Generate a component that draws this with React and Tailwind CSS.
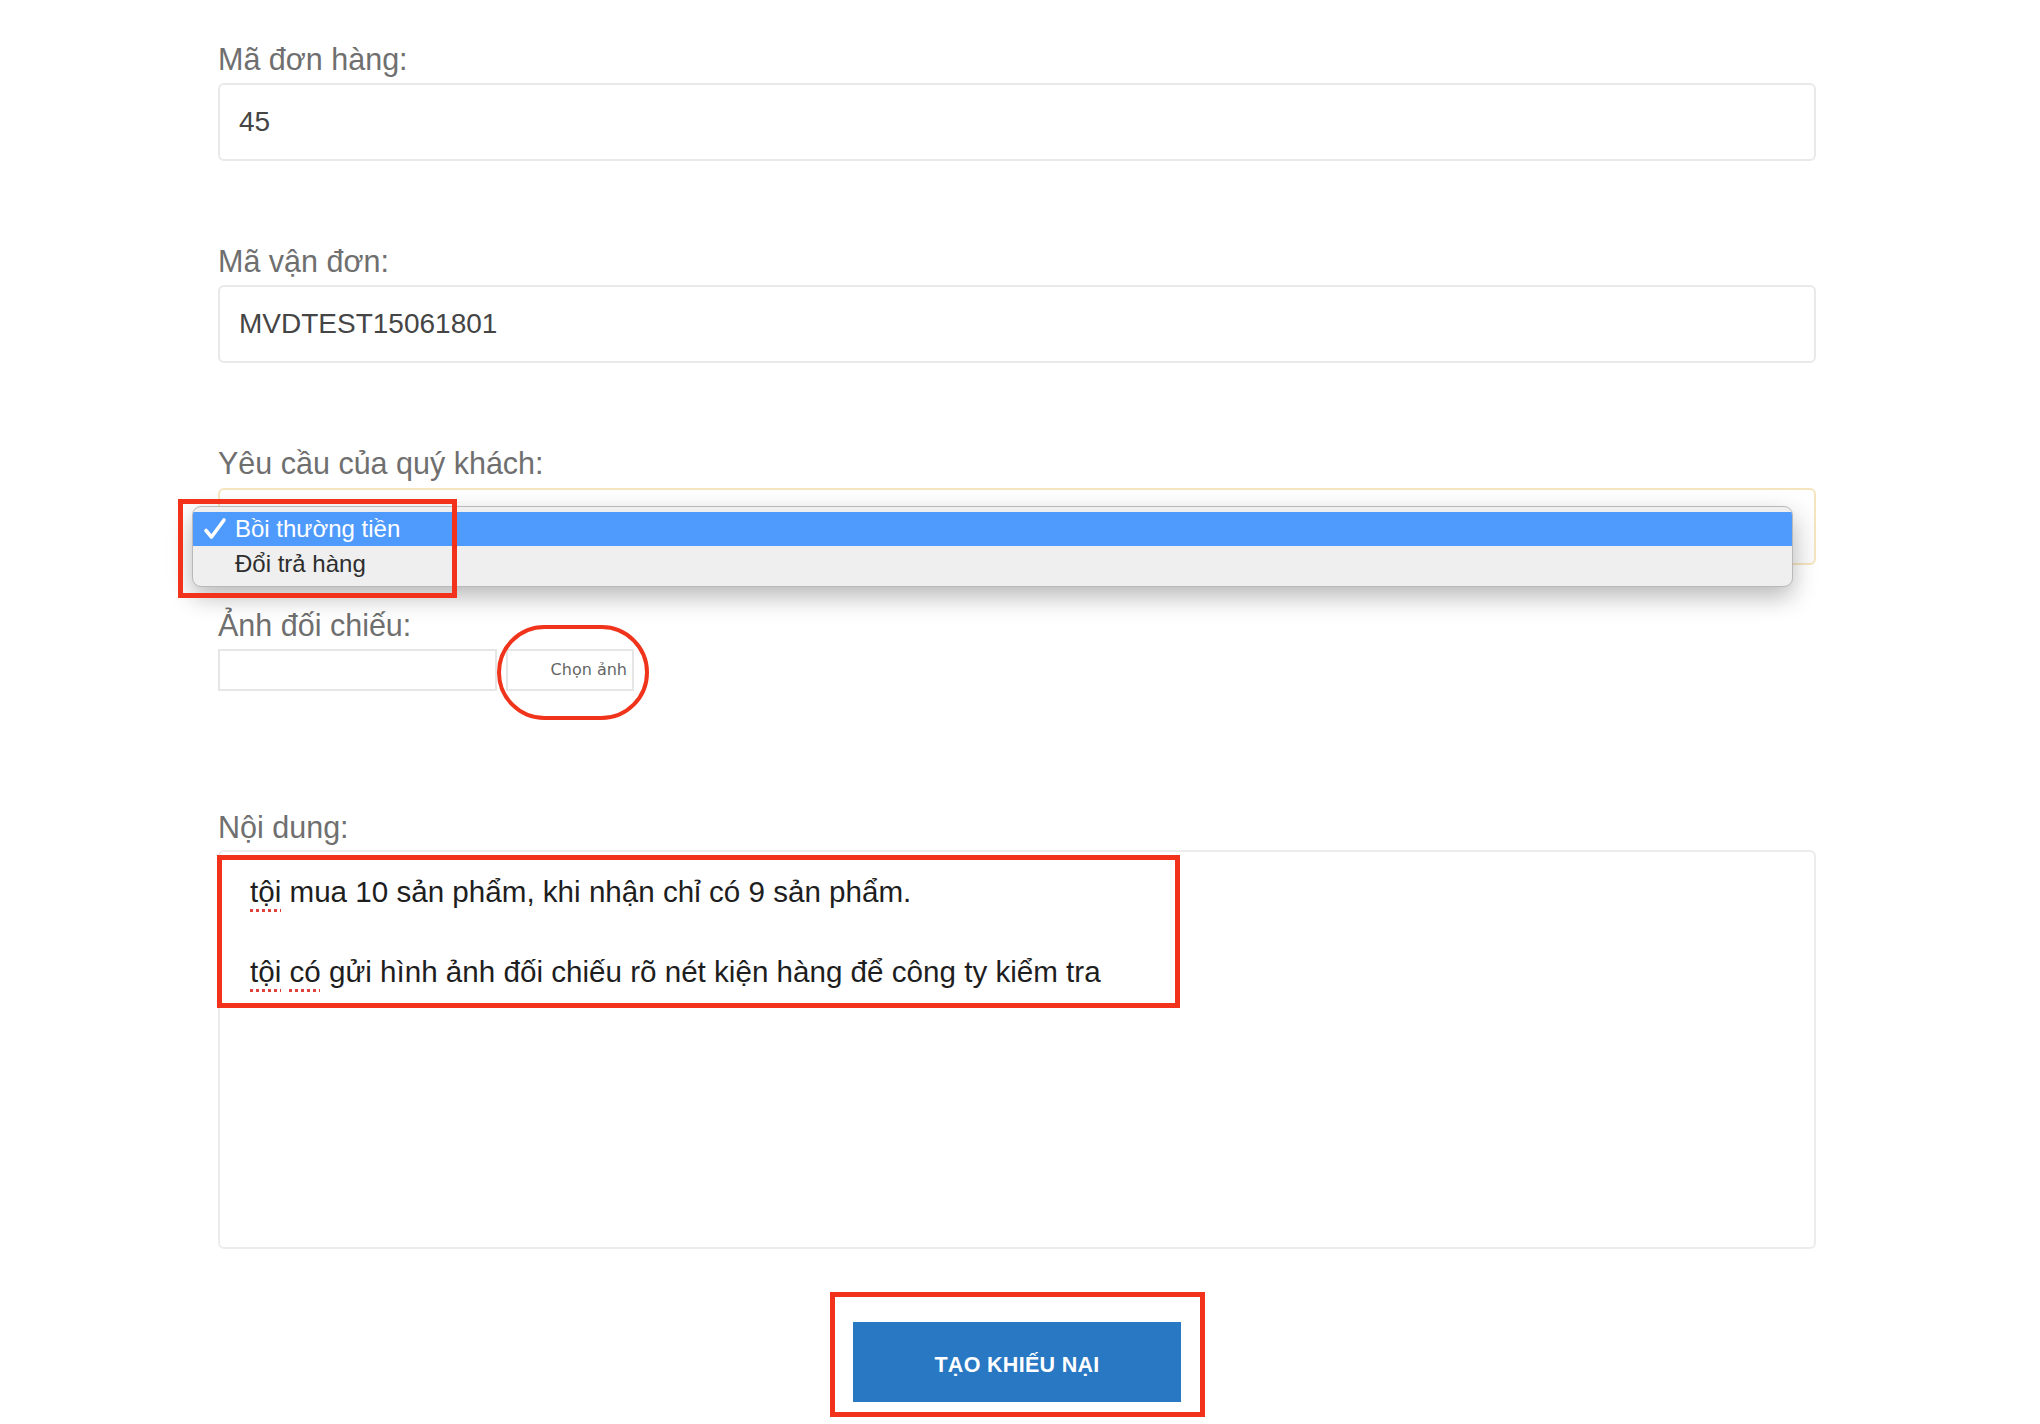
import React from 'react';

const font = { fontFamily: '"Liberation Sans", Arial, sans-serif' };

function Label({ children, className = '' }) {
  return (
    <div className={`text-[30.5px] leading-[34px] text-[#6f6f6f] ${className}`}>{children}</div>
  );
}

function TextBox({ value }) {
  return (
    <div className="mt-[7px] h-[78px] rounded-[6px] border-2 border-[#e9e9e9] px-[19px] flex items-center text-[28px] text-[#454545]">
      {value}
    </div>
  );
}

function Spell({ children }) {
  return (
    <span className="underline decoration-dotted decoration-[#e0413a] decoration-[3px] underline-offset-[7px]">
      {children}
    </span>
  );
}

export default function App() {
  return (
    <div className="min-h-screen bg-white" style={font}>
      <div className="ml-[218px] w-[1598px] pt-[42px] pb-[22px]">
        {/* Mã đơn hàng */}
        <Label>Mã đơn hàng:</Label>
        <TextBox value="45" />

        {/* Mã vận đơn */}
        <Label className="mt-[83px]">Mã vận đơn:</Label>
        <TextBox value="MVDTEST15061801" />

        {/* Yêu cầu - select open */}
        <Label className="mt-[83px]">Yêu cầu của quý khách:</Label>
        <div className="relative mt-[8px] h-[77px] rounded-[6px] border-2 border-[#f5e5be] bg-gradient-to-b from-white to-[#fafafa]">
          <div className="absolute left-[-28px] top-[16px] w-[1601px] h-[81px] rounded-[9px] border border-[#b9b9b9] bg-[#efefef] pt-[5px] shadow-[0_10px_24px_rgba(0,0,0,0.28)] overflow-hidden">
            <div className="h-[34px] bg-[#4f9bfd] flex items-center text-white text-[24px]">
              <svg className="ml-[10px] w-[24px] h-[24px]" viewBox="0 0 24 24" fill="none">
                <path d="M3 13.5 L8.5 20 L21 3" stroke="white" strokeWidth="3.6" strokeLinecap="round" strokeLinejoin="round" />
              </svg>
              <span className="ml-[8px]">Bồi thường tiền</span>
            </div>
            <div className="h-[35px] flex items-center text-[#2e2e2e] text-[24px] pl-[42px]">Đổi trả hàng</div>
          </div>
          <div className="absolute left-[-42px] top-[9px] w-[279px] h-[99px] border-[5px] border-[#f2321b]" />
        </div>

        {/* Ảnh đối chiếu */}
        <Label className="mt-[43px]">Ảnh đối chiếu:</Label>
        <div className="relative mt-[7px] flex">
          <div className="w-[279px] h-[42px] border-2 border-[#e6e6e6]" />
          <div
            className="ml-[9px] w-[128px] h-[42px] border-2 border-[#e6e6e6] flex items-center justify-end pr-[5px] text-[16px] text-[#666]"
            style={{ fontFamily: '"DejaVu Sans", sans-serif' }}
          >
            Chọn ảnh
          </div>
          <div className="absolute left-[279px] top-[-24px] w-[152px] h-[95px] rounded-full border-[4px] border-[#f0341c]" />
        </div>

        {/* Nội dung */}
        <Label className="mt-[119px]">Nội dung:</Label>
        <div className="relative mt-[6px] h-[399px] rounded-[6px] border-2 border-[#ececec] pl-[30px] pt-[20px] text-[29.6px] leading-[40px] text-[#1e1e1e]">
          <div>
            <Spell>tội</Spell> mua 10 sản phẩm, khi nhận chỉ có 9 sản phẩm.
          </div>
          <div className="h-[40px]" />
          <div>
            <Spell>tội</Spell> <Spell>có</Spell> gửi hình ảnh đối chiếu rõ nét kiện hàng để công ty kiểm tra
          </div>
          <div className="absolute left-[-3px] top-[3px] w-[963px] h-[153px] border-[5px] border-[#f2321b]" />
        </div>

        {/* Button */}
        <div className="mt-[73px] flex justify-center">
          <div className="relative">
            <button className="w-[328px] h-[80px] pt-[6px] bg-[#2878c3] text-white text-[21.5px] font-bold tracking-[0.3px]">
              TẠO KHIẾU NẠI
            </button>
            <div className="absolute left-[-23px] top-[-30px] w-[375px] h-[125px] border-[5px] border-[#f2321b]" />
          </div>
        </div>
      </div>
    </div>
  );
}
